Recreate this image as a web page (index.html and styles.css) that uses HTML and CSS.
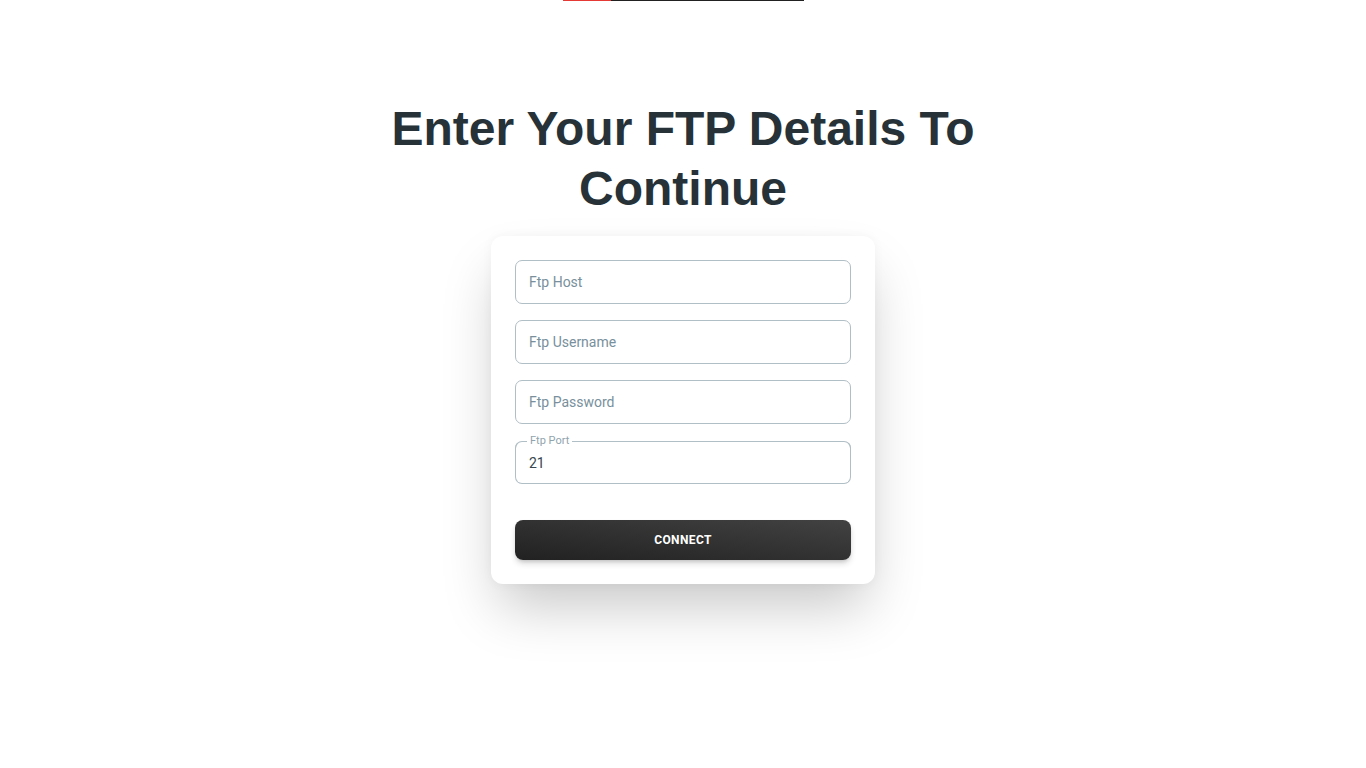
FILE: index.html
```html
<!DOCTYPE html>
<html lang="en">
<head>
<meta charset="utf-8">
<title>FTP Details</title>
<link rel="stylesheet" href="styles.css">
</head>
<body>
<div class="topbar"><div class="topbar-red"></div></div>
<main class="page">
  <h1 class="title">Enter Your FTP Details To Continue</h1>
  <form class="card">
    <div class="field"><input class="input" type="text" placeholder="Ftp Host"></div>
    <div class="field"><input class="input" type="text" placeholder="Ftp Username"></div>
    <div class="field"><input class="input" type="password" placeholder="Ftp Password"></div>
    <div class="field field-filled">
      <input class="input" type="text" value="21">
      <label class="float-label">Ftp Port</label>
    </div>
    <button class="btn" type="button">Connect</button>
  </form>
</main>
</body>
</html>
```
FILE: styles.css
```css
* { box-sizing: border-box; }
html, body { margin: 0; padding: 0; background: #fff; }
body { font-family: Roboto, "Noto Sans", Arial, sans-serif; min-height: 768px; }

.topbar {
  width: 241px;
  height: 1px;
  margin-left: 563px;
  background: #212121;
  display: flex;
}
.topbar-red { width: 48px; height: 1px; background: #e53935; }

.page {
  display: flex;
  flex-direction: column;
  align-items: center;
  padding-top: 98px;
}

.title {
  margin: 0;
  width: 620px;
  text-align: center;
  font-family: "Liberation Sans", Arial, sans-serif;
  font-weight: 700;
  font-size: 48px;
  line-height: 60px;
  color: #263238;
}

.card {
  margin-top: 17px;
  width: 384px;
  padding: 24px;
  background: #fff;
  border-radius: 12px;
  box-shadow: 0 30px 55px -8px rgba(0,0,0,0.22), 0 0 12px rgba(0,0,0,0.04);
  display: flex;
  flex-direction: column;
  gap: 16px;
}

.field { position: relative; height: 44px; }
.field-filled { margin-top: 1px; height: 43px; }
.input {
  width: 100%;
  height: 100%;
  border: 1px solid #b0bec5;
  border-radius: 7px;
  padding: 0 13px;
  font-family: Roboto, sans-serif;
  font-size: 14px;
  color: #37474f;
  background: transparent;
  outline: none;
}
.input::placeholder { color: #78909c; opacity: 1; }

.field-filled .input { border-top-color: transparent; }
.float-label {
  position: absolute;
  left: 0;
  right: 0;
  top: -6px;
  height: 12px;
  display: flex;
  font-size: 11px;
  line-height: 11px;
  color: #90a4ae;
  pointer-events: none;
}
.float-label::before, .float-label::after {
  content: "";
  border-top: 1px solid #b0bec5;
  margin-top: 6px;
  height: 6px;
}
.float-label::before {
  width: 11px;
  margin-right: 3px;
  border-left: 1px solid #b0bec5;
  border-top-left-radius: 7px;
}
.float-label::after {
  flex: 1;
  margin-left: 3px;
  border-right: 1px solid #b0bec5;
  border-top-right-radius: 7px;
}

.btn {
  margin-top: 20px;
  height: 40px;
  width: 100%;
  border: none;
  border-radius: 8px;
  background: linear-gradient(to top right, #212121, #424242);
  color: #fff;
  font-family: Roboto, sans-serif;
  font-weight: 700;
  font-size: 12px;
  text-transform: uppercase;
  letter-spacing: 0.4px;
  box-shadow: 0 4px 6px -1px rgba(33,33,33,0.2), 0 2px 4px -2px rgba(33,33,33,0.2);
  cursor: pointer;
}
```
